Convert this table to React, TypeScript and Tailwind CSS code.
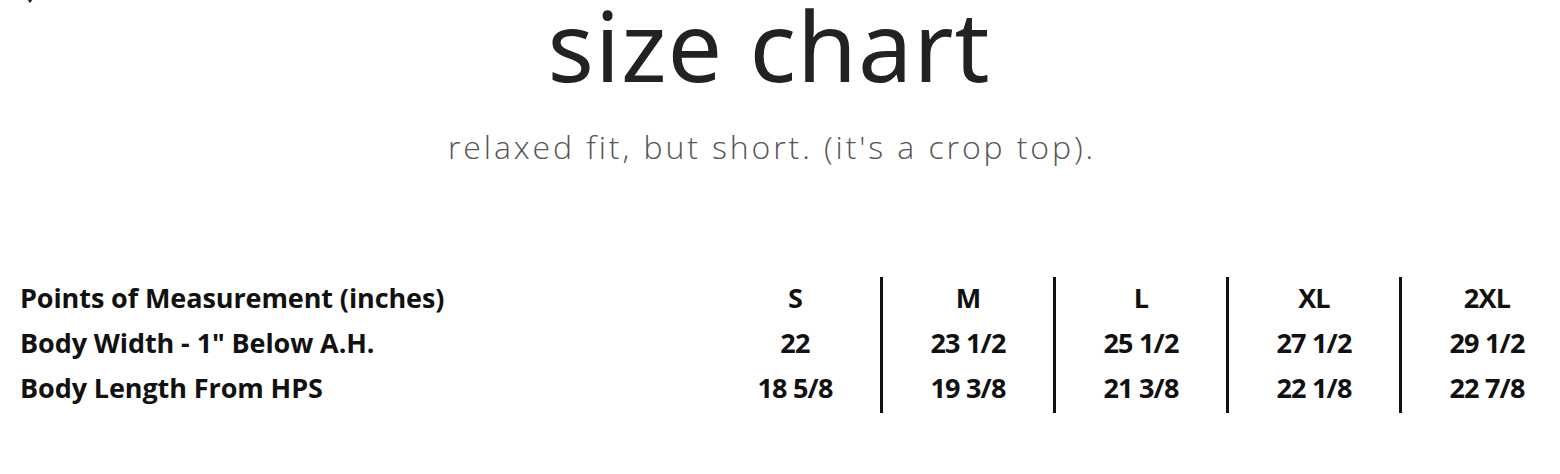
import React from "react";

const sizes = [
  { h: "S", w: "22", l: "18 5/8" },
  { h: "M", w: "23 1/2", l: "19 3/8" },
  { h: "L", w: "25 1/2", l: "21 3/8" },
  { h: "XL", w: "27 1/2", l: "22 1/8" },
  { h: "2XL", w: "29 1/2", l: "22 7/8" },
];

function SizeCol({ h, w, l }: { h: string; w: string; l: string }) {
  return (
    <div className="w-[170px] shrink-0 flex flex-col items-center tracking-[-0.8px]">
      <div className="h-[45px] leading-[45px]">{h}</div>
      <div className="h-[45px] leading-[45px]">{w}</div>
      <div className="h-[45px] leading-[45px]">{l}</div>
    </div>
  );
}

function Bar() {
  return <div className="w-[3px] shrink-0 h-[136px] mt-[2px] bg-[#111]" />;
}

export default function App() {
  return (
    <div className="relative w-[1560px] h-[474px] overflow-hidden bg-white">
      <svg
        className="absolute left-[24px] top-[-9px]"
        width="12"
        height="12"
        viewBox="0 0 12 12"
      >
        <path d="M2 4 L6 10 L10 4" fill="none" stroke="#222" strokeWidth="2.5" />
      </svg>
      <div className="flex flex-col items-center pr-[22px]">
        <h1 className="mt-[-4px] text-[97px] leading-none tracking-[1px] text-[#222] font-['Noto_Sans',sans-serif] font-normal">
          size chart
        </h1>
        <p className="mt-[38px] ml-[6px] text-[32px] leading-none tracking-[2.9px] text-[#555] font-light font-['Open_Sans',sans-serif]">
          relaxed fit, but short. (it's a crop top).
        </p>
      </div>
      <div className="mt-[112px] flex items-start text-[27px] font-bold text-[#111] font-['Open_Sans',sans-serif]">
        <div className="w-[710px] shrink-0 pl-[20px] flex flex-col tracking-[-0.1px]">
          <div className="h-[45px] leading-[45px]">Points of Measurement (inches)</div>
          <div className="h-[45px] leading-[45px]">Body Width - 1" Below A.H.</div>
          <div className="h-[45px] leading-[45px]">Body Length From HPS</div>
        </div>
        {sizes.map((s, i) => (
          <React.Fragment key={s.h}>
            {i > 0 && <Bar />}
            <SizeCol {...s} />
          </React.Fragment>
        ))}
      </div>
    </div>
  );
}
